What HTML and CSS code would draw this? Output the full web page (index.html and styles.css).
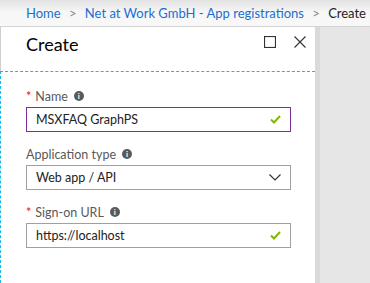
FILE: index.html
```html
<!DOCTYPE html>
<html lang="en">
<head>
    <meta charset="UTF-8">
    <meta name="viewport" content="width=device-width, initial-scale=1.0">
    <title>Create - App registrations</title>
    <link rel="stylesheet" href="styles.css">
</head>
<body>
    <nav class="breadcrumb">
        <a href="#">Home</a>
        <span class="sep">&gt;</span>
        <a href="#">Net at Work GmbH - App registrations</a>
        <span class="sep">&gt;</span>
        <span class="current">Create</span>
    </nav>

    <div class="main">
        <section class="blade">
            <header class="blade-header">
                <h1>Create</h1>
                <div class="blade-actions">
                    <button class="icon-btn" title="Maximize">
                        <svg width="12" height="12" viewBox="0 0 12 12"><rect x="0.5" y="0.5" width="11" height="11" fill="none" stroke="#333" stroke-width="1.2"/></svg>
                    </button>
                    <button class="icon-btn" title="Close">
                        <svg width="12" height="12" viewBox="0 0 12 12"><path d="M0.5 0.5 L11.5 11.5 M11.5 0.5 L0.5 11.5" stroke="#333" stroke-width="1.1"/></svg>
                    </button>
                </div>
            </header>

            <form class="blade-content">
                <div class="field">
                    <label><span class="req">*</span> Name <span class="info">i</span></label>
                    <div class="input focused">
                        <span class="value">MSXFAQ GraphPS</span>
                        <svg class="check" width="11" height="9" viewBox="0 0 11 9"><path d="M1 4.5 L4 7.5 L10 1" fill="none" stroke="#7fba00" stroke-width="2"/></svg>
                    </div>
                </div>

                <div class="field">
                    <label>Application type <span class="info">i</span></label>
                    <div class="input">
                        <span class="value">Web app / API</span>
                        <svg class="chevron" width="12" height="7" viewBox="0 0 12 7"><path d="M0.5 0.5 L6 6 L11.5 0.5" fill="none" stroke="#333" stroke-width="1.2"/></svg>
                    </div>
                </div>

                <div class="field">
                    <label><span class="req">*</span> Sign-on URL <span class="info">i</span></label>
                    <div class="input">
                        <span class="value">https://localhost</span>
                        <svg class="check" width="11" height="9" viewBox="0 0 11 9"><path d="M1 4.5 L4 7.5 L10 1" fill="none" stroke="#7fba00" stroke-width="2"/></svg>
                    </div>
                </div>
            </form>
        </section>
        <div class="blade-edge"></div>
        <div class="backdrop"></div>
    </div>
</body>
</html>
```

FILE: styles.css
```css
/* General body styling */
body {
    margin: 0;
    height: 283px;
    overflow: hidden;
    display: flex;
    flex-direction: column;
    font-family: Lato, "Noto Sans", sans-serif;
    background: #e8e8e8;
    color: #000;
}

/* Breadcrumb bar */
.breadcrumb {
    height: 27px;
    box-sizing: border-box;
    padding: 5px 0 0 26px;
    background: linear-gradient(to bottom, #e2e2e2, #f6f6f6 45%, #f8f8f8);
    border-bottom: 1px solid #d4d4d4;
    font-size: 13px;
    white-space: nowrap;
}

.breadcrumb a {
    color: #1a6fd1;
    text-decoration: none;
}

.breadcrumb .sep {
    color: #888;
    margin: 0 5px;
}

.breadcrumb .current {
    color: #222;
}

/* Layout below breadcrumb */
.main {
    flex: 1;
    display: flex;
}

.blade {
    width: 315px;
    background: #fff;
    display: flex;
    flex-direction: column;
}

.blade-edge {
    width: 5px;
    background: #dadada;
}

.backdrop {
    flex: 1;
    background: #e6e6e6;
}

/* Blade header */
.blade-header {
    height: 44px;
    box-sizing: border-box;
    border-left: 1px solid #cfcfcf;
    display: flex;
    align-items: flex-start;
    justify-content: space-between;
    padding: 5px 9px 0 25px;
}

.blade-header h1 {
    margin: 0;
    font-size: 18px;
    font-weight: normal;
    line-height: 24px;
}

.blade-actions {
    display: flex;
    gap: 18px;
    padding-top: 4px;
}

.icon-btn {
    border: none;
    background: none;
    padding: 0;
    width: 12px;
    height: 12px;
    display: flex;
}

/* Form */
.blade-content {
    flex: 1;
    margin: 0;
    border-top: 1px dashed #1cb6ef;
    border-left: 1px dashed #1cb6ef;
    padding: 15px 24px 0 25px;
    display: flex;
    flex-direction: column;
    gap: 13px;
}

.field label {
    display: flex;
    align-items: center;
    gap: 4px;
    font-size: 12.5px;
    color: #595959;
    height: 18px;
    margin-bottom: 2px;
}

.req {
    color: #e81123;
}

.info {
    display: inline-flex;
    align-items: center;
    justify-content: center;
    width: 10px;
    height: 10px;
    border-radius: 50%;
    background: #5a5a5a;
    color: #fff;
    font-size: 8px;
    font-weight: bold;
    margin-left: 2px;
}

.input {
    height: 23px;
    border: 1px solid #a0a0a0;
    display: flex;
    align-items: center;
    justify-content: space-between;
    padding: 0 9px 0 9px;
    font-size: 12.5px;
    color: #222;
}

.input.focused {
    border-color: #7d2e99;
}
```
